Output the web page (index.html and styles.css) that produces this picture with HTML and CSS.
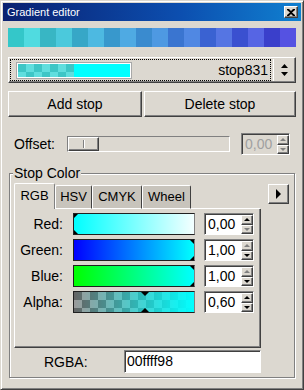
FILE: index.html
```html
<!DOCTYPE html>
<html lang="en">
<head>
    <meta charset="UTF-8">
    <meta name="viewport" content="width=device-width, initial-scale=1.0">
    <title>Gradient editor</title>
    <link rel="stylesheet" href="styles.css">
</head>
<body>
    <div class="window">
        <div class="titlebar">
            <span class="title">Gradient editor</span>
            <span class="close raised">
                <svg width="8" height="7" viewBox="0 0 8 7"><path d="M0 0h2l2 2 2-2h2v1L5 3.5 8 6v1H6L4 5 2 7H0V6l3-2.5L0 1z" fill="#000"/></svg>
            </span>
        </div>

        <div class="content">
            <div class="swatches">
                <div></div><div></div><div></div><div></div><div></div><div></div>
                <div></div><div></div><div></div><div></div><div></div><div></div>
                <div></div><div></div><div></div><div></div><div></div><div></div>
            </div>

            <div class="combo raised">
                <div class="combo-field">
                    <div class="preview">
                        <div class="preview-checker"></div>
                        <div class="preview-solid"></div>
                    </div>
                    <span class="combo-text">stop831</span>
                </div>
                <div class="combo-btn">
                    <svg width="7" height="12" viewBox="0 0 7 12"><path d="M3.5 0L7 4H0z M0 8h7l-3.5 4z" fill="#000"/></svg>
                </div>
            </div>

            <div class="actions">
                <button class="raised">Add stop</button>
                <button class="raised">Delete stop</button>
            </div>

            <div class="offset-row">
                <span class="offset-label">Offset:</span>
                <div class="slider">
                    <div class="thumb raised"><i></i></div>
                </div>
                <div class="spin spin-disabled offset-spin">
                    <div class="spin-field">0,00</div>
                    <div class="spin-btns">
                        <div class="spin-btn raised"><i class="tri-up off"></i></div>
                        <div class="spin-btn raised"><i class="tri-down off"></i></div>
                    </div>
                </div>
            </div>

            <div class="group">
                <span class="group-title">Stop Color</span>

                <div class="tabs-row">
                    <div class="tabs">
                        <div class="tab tab-active">RGB</div>
                        <div class="tab tab-hsv">HSV</div>
                        <div class="tab tab-cmyk">CMYK</div>
                        <div class="tab tab-wheel">Wheel</div>
                        <div class="tab-fill"></div>
                    </div>
                    <div class="arrow-btn raised"><i class="tri-right"></i></div>
                </div>

                <div class="panel">
                    <span class="row-label">Red:</span>
                    <div class="bar bar-red">
                        <i class="mark-top" style="left: 0%"></i>
                        <i class="mark-bottom" style="left: 0%"></i>
                    </div>
                    <div class="spin">
                        <div class="spin-field">0,00</div>
                        <div class="spin-btns">
                            <div class="spin-btn raised"><i class="tri-up"></i></div>
                            <div class="spin-btn raised"><i class="tri-down off"></i></div>
                        </div>
                    </div>

                    <span class="row-label">Green:</span>
                    <div class="bar bar-green">
                        <i class="mark-top" style="left: 100%"></i>
                        <i class="mark-bottom" style="left: 100%"></i>
                    </div>
                    <div class="spin">
                        <div class="spin-field">1,00</div>
                        <div class="spin-btns">
                            <div class="spin-btn raised"><i class="tri-up off"></i></div>
                            <div class="spin-btn raised"><i class="tri-down"></i></div>
                        </div>
                    </div>

                    <span class="row-label">Blue:</span>
                    <div class="bar bar-blue">
                        <i class="mark-top" style="left: 100%"></i>
                        <i class="mark-bottom" style="left: 100%"></i>
                    </div>
                    <div class="spin">
                        <div class="spin-field">1,00</div>
                        <div class="spin-btns">
                            <div class="spin-btn raised"><i class="tri-up off"></i></div>
                            <div class="spin-btn raised"><i class="tri-down"></i></div>
                        </div>
                    </div>

                    <span class="row-label">Alpha:</span>
                    <div class="bar bar-alpha">
                        <i class="mark-top" style="left: 59%"></i>
                        <i class="mark-bottom" style="left: 59%"></i>
                    </div>
                    <div class="spin">
                        <div class="spin-field">0,60</div>
                        <div class="spin-btns">
                            <div class="spin-btn raised"><i class="tri-up"></i></div>
                            <div class="spin-btn raised"><i class="tri-down"></i></div>
                        </div>
                    </div>
                </div>

                <div class="rgba-row">
                    <span class="rgba-label">RGBA:</span>
                    <div class="rgba-input">00ffff98</div>
                </div>
            </div>
        </div>
    </div>
</body>
</html>
```

FILE: styles.css
```css
* {
    box-sizing: border-box;
}

body {
    margin: 0;
    padding: 0;
    font-family: "Liberation Sans", Arial, sans-serif;
    font-size: 14px;
    color: #000;
    background: #dcd8d0;
}

.window {
    width: 304px;
    height: 390px;
    overflow: hidden;
    background: #dcd8d0;
    border: 1px solid;
    border-color: #dcd8d0 #404040 #404040 #dcd8d0;
    box-shadow: inset 1px 1px #fff, inset -1px -1px #808080;
    padding: 2px;
}

/* shared bevels */
.raised {
    background: #dcd8d0;
    border: 1px solid;
    border-color: #fff #404040 #404040 #fff;
    box-shadow: inset -1px -1px #808080;
}

.titlebar {
    height: 18px;
    display: flex;
    align-items: center;
    justify-content: space-between;
    padding: 0 3px 0 4px;
    background: linear-gradient(to right, #0a2070, #0c4fb0 60%, #1080d0);
    color: #fff;
}

.title {
    font-size: 11px;
}

.close {
    width: 14px;
    height: 12px;
    display: flex;
    align-items: center;
    justify-content: center;
}

.content {
    padding: 7px 5px 0;
}

.swatches {
    display: flex;
    height: 19px;
}

.swatches div {
    width: 16px;
}

.swatches div:nth-child(1) { background: #34c7c9; }
.swatches div:nth-child(2) { background: #50dbe0; }
.swatches div:nth-child(3) { background: #38b6c4; }
.swatches div:nth-child(4) { background: #4bc9dc; }
.swatches div:nth-child(5) { background: #37a7c7; }
.swatches div:nth-child(6) { background: #4db9e1; }
.swatches div:nth-child(7) { background: #3898cc; }
.swatches div:nth-child(8) { background: #4faae3; }
.swatches div:nth-child(9) { background: #3a8bcf; }
.swatches div:nth-child(10) { background: #4e99e2; }
.swatches div:nth-child(11) { background: #3a75d0; }
.swatches div:nth-child(12) { background: #5088e3; }
.swatches div:nth-child(13) { background: #3a62d2; }
.swatches div:nth-child(14) { background: #5575e3; }
.swatches div:nth-child(15) { background: #3a50d0; }
.swatches div:nth-child(16) { background: #5665e4; }
.swatches div:nth-child(17) { background: #3a3fcb; }
.swatches div:nth-child(18) { background: #5552e2; }

.combo {
    margin-top: 10px;
    height: 26px;
    display: flex;
    padding: 1px;
}

.combo-field {
    flex: 1;
    display: flex;
    align-items: center;
    justify-content: space-between;
    border: 1px dotted #000;
    padding: 0 2px 0 5px;
}

.preview {
    width: 116px;
    height: 17px;
    display: flex;
    border: 1px solid #a8a8a8;
    background: #fff;
    padding: 1px;
}

.preview-checker {
    width: 56px;
    background: conic-gradient(#60dede 25%, #3ec6c6 0 50%, #60dede 0 75%, #3ec6c6 0) 0 0 / 16px 16px;
}

.preview-solid {
    flex: 1;
    background: #00ffff;
}

.combo-btn {
    width: 21px;
    border-left: 1px solid #fff;
    margin-left: 2px;
    display: flex;
    align-items: center;
    justify-content: center;
}

.actions {
    margin-top: 8px;
    display: grid;
    grid-template-columns: 134px 1fr;
    gap: 2px;
}

button {
    height: 26px;
    font-family: inherit;
    font-size: 14px;
    color: #000;
    padding: 0;
}

.offset-row {
    margin-top: 16px;
    height: 22px;
    display: flex;
    align-items: center;
    padding: 0 6px;
}

.offset-label {
    width: 53px;
}

.slider {
    width: 163px;
    height: 16px;
    border: 1px solid;
    border-color: #808080 #fff #fff #808080;
    display: flex;
}

.thumb {
    width: 31px;
    display: flex;
    align-items: center;
    justify-content: center;
}

.thumb i {
    width: 1px;
    height: 8px;
    background: #808080;
    box-shadow: 1px 0 #fff;
}

.spin {
    width: 50px;
    height: 22px;
    display: flex;
    border: 1px solid;
    border-color: #808080 #fff #fff #808080;
    box-shadow: inset 1px 1px #404040;
    padding: 1px 0 0 1px;
    background: #fff;
}

.offset-spin {
    margin-left: auto;
    width: 49px;
}

.spin-field {
    flex: 1;
    padding-left: 2px;
    line-height: 19px;
}

.spin-disabled,
.spin-disabled .spin-field {
    background: #dcd8d0;
    color: #a0a0a0;
}

.spin-btns {
    width: 12px;
    display: flex;
    flex-direction: column;
}

.spin-btn {
    flex: 1;
    display: flex;
    align-items: center;
    justify-content: center;
}

.tri-up,
.tri-down {
    width: 0;
    height: 0;
    border-left: 3px solid transparent;
    border-right: 3px solid transparent;
}

.tri-up {
    border-bottom: 3px solid #000;
}

.tri-down {
    border-top: 3px solid #000;
}

.tri-up.off {
    border-bottom-color: #808080;
}

.tri-down.off {
    border-top-color: #808080;
}

.tri-right {
    width: 0;
    height: 0;
    border-top: 5px solid transparent;
    border-bottom: 5px solid transparent;
    border-left: 5px solid #000;
}

.group {
    position: relative;
    margin: 18px 1px 0;
    border: 1px solid #808080;
    box-shadow: inset 1px 1px #fff, 1px 1px #fff;
    padding: 9px 5px 4px 4px;
}

.group-title {
    position: absolute;
    top: -9px;
    left: 3px;
    line-height: 16px;
    padding: 0 1px;
    background: #dcd8d0;
}

.tabs-row {
    display: flex;
    align-items: flex-start;
}

.tabs {
    width: 247px;
    height: 26px;
    display: flex;
    align-items: flex-end;
}

.tab {
    height: 24px;
    font-size: 13px;
    text-align: center;
    line-height: 21px;
    background: #c8c4bc;
    border: 1px solid;
    border-color: #fff #404040 #fff #fff;
    border-radius: 2px 2px 0 0;
}

.tab-active {
    width: 41px;
    height: 26px;
    line-height: 24px;
    background: #dcd8d0;
    border-bottom: none;
    border-right-color: #808080;
}

.tab-hsv { width: 37px; }
.tab-cmyk { width: 50px; }
.tab-wheel { width: 49px; }

.tab-fill {
    flex: 1;
    border-bottom: 1px solid #fff;
}

.arrow-btn {
    margin: 1px 0 0 8px;
    width: 21px;
    height: 20px;
    display: flex;
    align-items: center;
    justify-content: center;
}

.panel {
    width: 247px;
    height: 139px;
    border-left: 1px solid #fff;
    border-right: 1px solid #404040;
    border-bottom: 1px solid #404040;
    box-shadow: inset -1px -1px #808080;
    padding-top: 4px;
    display: grid;
    grid-template-columns: 48px 123px 50px;
    grid-auto-rows: 22px;
    column-gap: 9px;
    row-gap: 4px;
    align-content: start;
}

.row-label {
    text-align: right;
    line-height: 22px;
}

.bar {
    position: relative;
    overflow: hidden;
    margin-left: 1px;
    border: 1px solid #202020;
    border-right-color: #808080;
}

.bar-red {
    background: linear-gradient(to right, #00ffff, #f4ffff);
}

.bar-green {
    background: linear-gradient(to right, #0000ff, #00ffff);
}

.bar-blue {
    background: linear-gradient(to right, #00ff00, #00ffff);
}

.bar-alpha {
    background:
        linear-gradient(to right, rgba(0, 255, 255, 0), #00ffff),
        conic-gradient(#9a9a9a 25%, #646464 0 50%, #9a9a9a 0 75%, #646464 0) 0 0 / 16px 16px;
}

.mark-top,
.mark-bottom {
    position: absolute;
    width: 0;
    height: 0;
    margin-left: -4px;
    border-left: 4px solid transparent;
    border-right: 4px solid transparent;
}

.mark-top {
    top: 0;
    border-top: 4px solid #000;
}

.mark-bottom {
    bottom: 0;
    border-bottom: 4px solid #000;
}

.rgba-row {
    margin-top: 2px;
    display: flex;
    align-items: center;
}

.rgba-label {
    width: 110px;
    padding-left: 30px;
}

.rgba-input {
    width: 137px;
    height: 23px;
    background: #fff;
    border: 1px solid;
    border-color: #808080 #fff #fff #808080;
    box-shadow: inset 1px 1px #404040;
    padding-left: 2px;
    line-height: 21px;
}
```
